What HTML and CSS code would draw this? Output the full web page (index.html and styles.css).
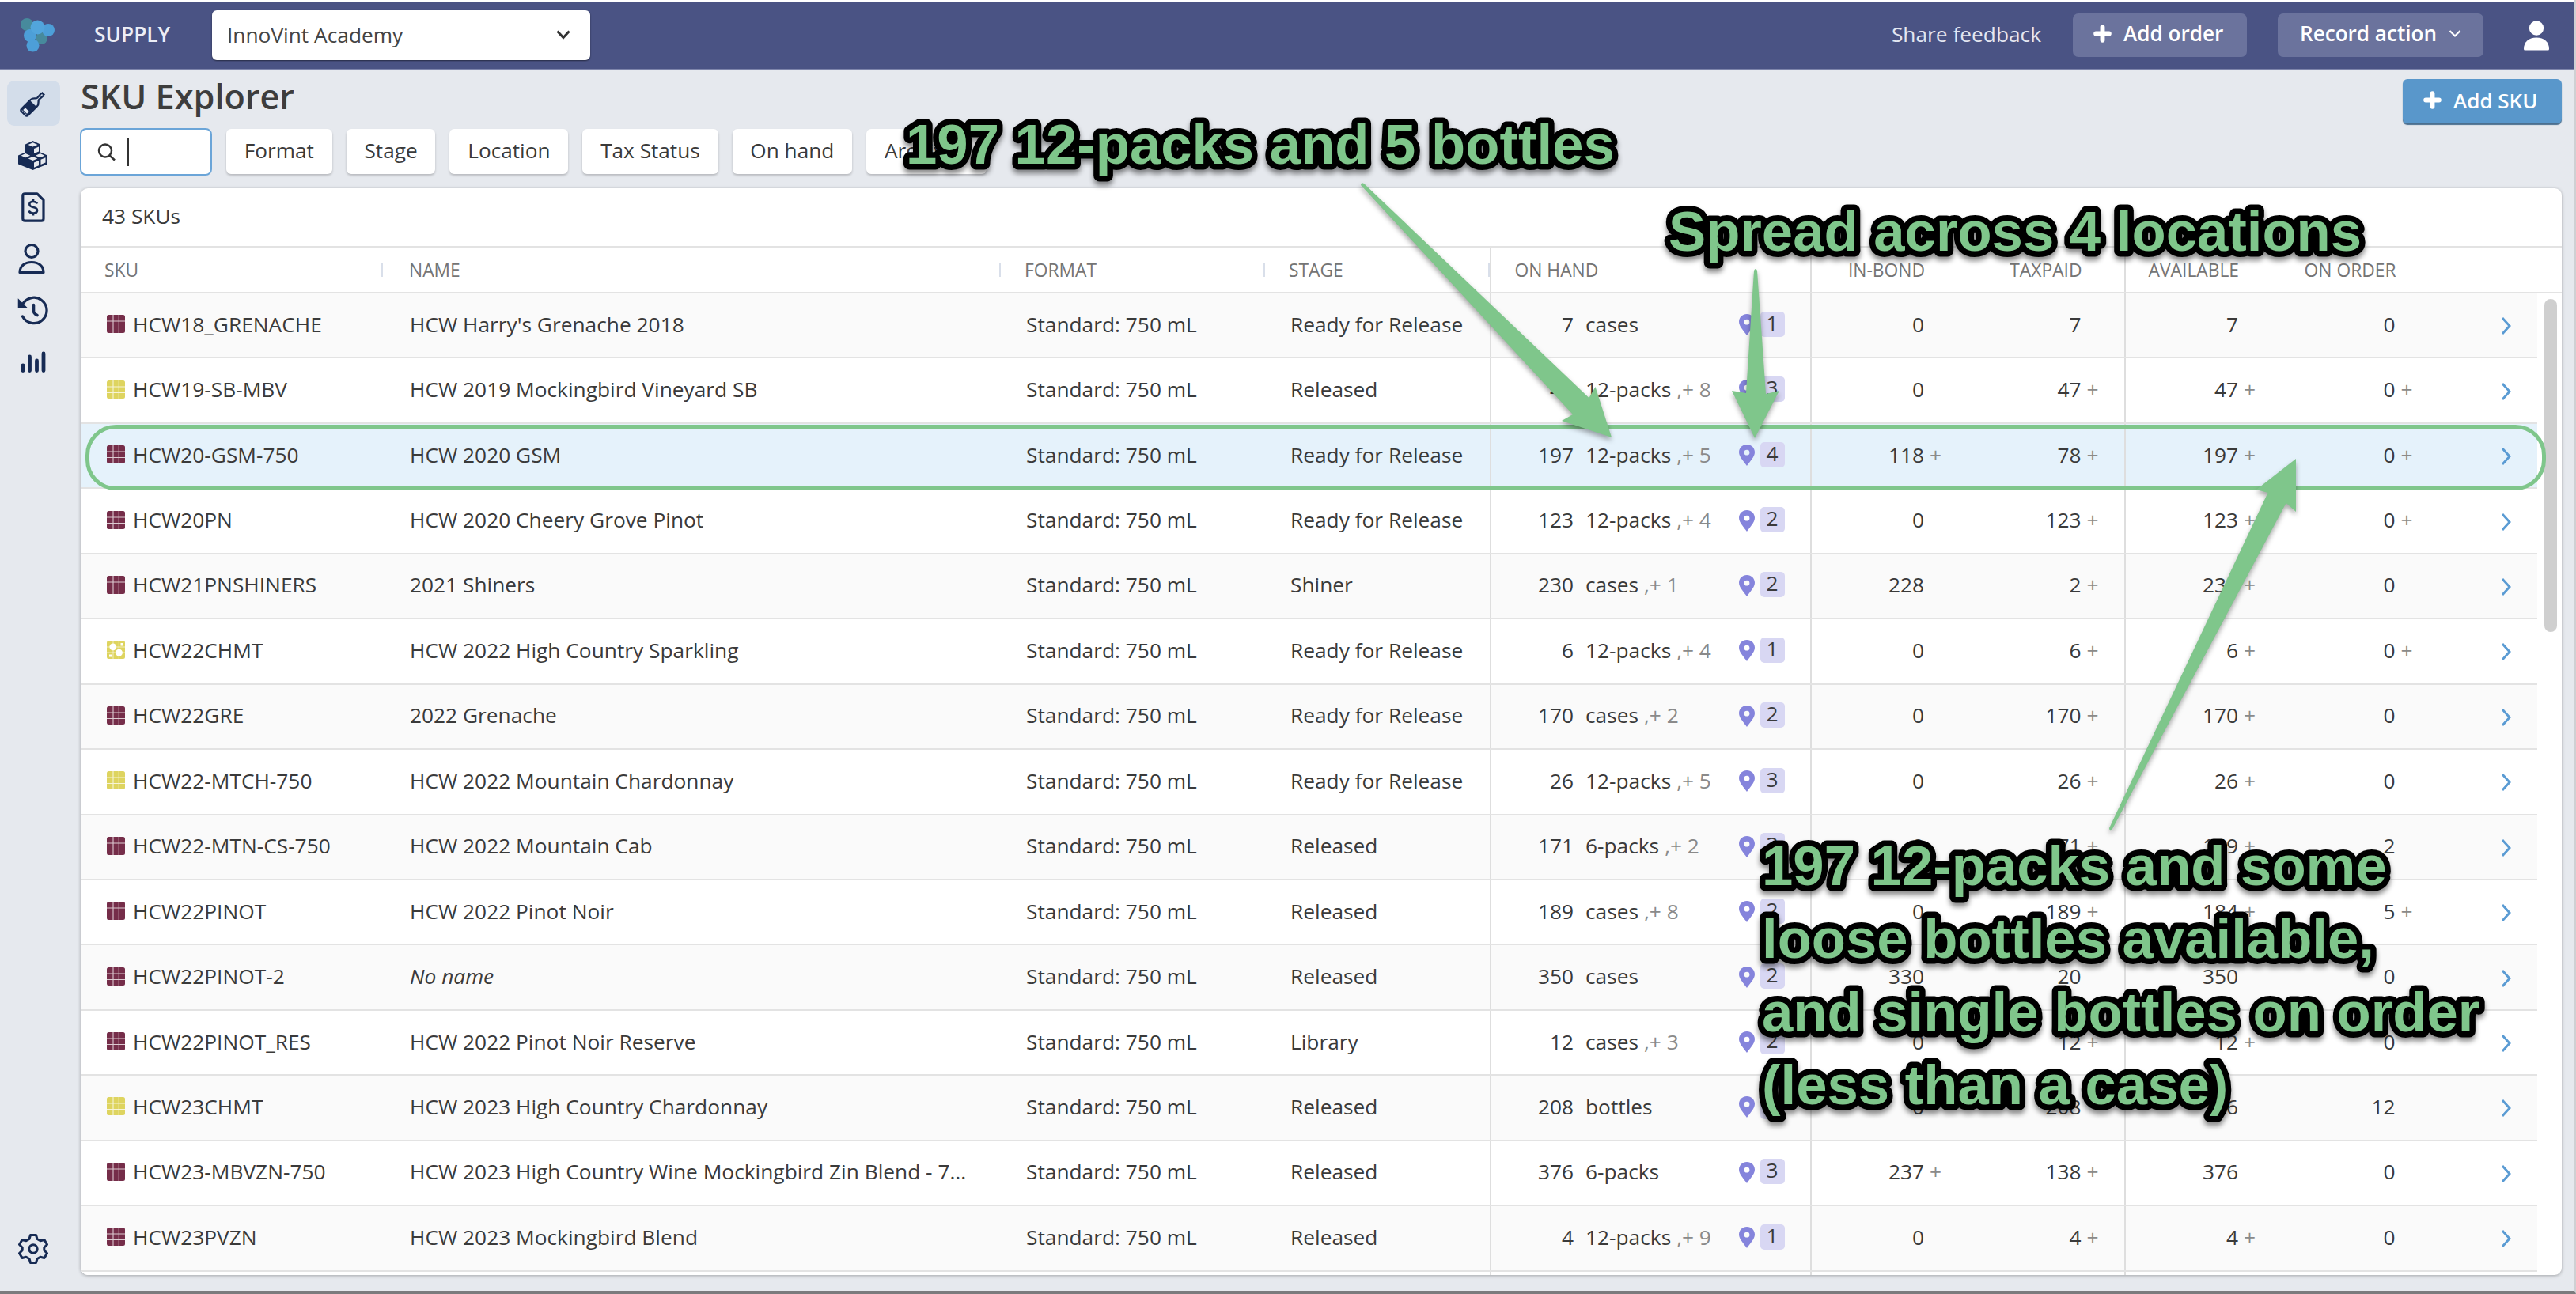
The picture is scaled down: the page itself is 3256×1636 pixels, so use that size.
FILE: index.html
```html
<!DOCTYPE html>
<html lang="en">
<head>
    <meta charset="UTF-8">
    <title>SKU Explorer</title>
    <link rel="stylesheet" href="styles.css">
</head>
<body>
    <svg class="sprite">
        <symbol id="plus" viewBox="0 0 22 22"><path d="M11 3v16M3 11h16" stroke="currentColor" stroke-width="5.600" stroke-linecap="round"/></symbol>
        <symbol id="pin" viewBox="0 0 20 27"><path fill-rule="evenodd" d="M10 0C4.300 0 0 4.400 0 9.800 0 15.500 6.500 22 10 27c3.500-5 10-11.500 10-17.200C20 4.400 15.700 0 10 0zm0 6.800a3.400 3.400 0 1 1 0 6.800 3.400 3.400 0 0 1 0-6.800z" fill="#8584dc"/></symbol>
        <symbol id="arrow" viewBox="0 0 14 24"><path d="M2 2l9 10-9 10" fill="none" stroke="#5a9bd3" stroke-width="2.900"/></symbol>
        <symbol id="grid" viewBox="0 0 23 23">
            <rect width="23" height="23" rx="2.500" fill="currentColor"/>
            <path d="M8 0v23M15.300 0v23M0 8h23M0 15.500h23" stroke="#fff" stroke-opacity=".75" stroke-width="1.100"/>
        </symbol>
        <symbol id="bubbles" viewBox="0 0 23 23">
            <rect width="23" height="23" rx="2.500" fill="currentColor"/>
            <path d="M8 0v23M15.300 0v23M0 8h23M0 15h23" stroke="#fff" stroke-opacity=".6" stroke-width="1"/>
            <circle cx="7.800" cy="7.800" r="4.400" fill="#fff"/>
            <circle cx="15.500" cy="15.200" r="4.400" fill="#fff"/>
            <path d="M17.500 3h3v3.500h-3zM3 17.500h3v3h-3z" fill="#fff"/>
        </symbol>
    </svg>

    <div class="topbar">
        <svg class="logo" viewBox="0 0 44 44">
            <circle cx="8" cy="8" r="8" fill="#478a9c"/>
            <circle cx="26.500" cy="25.500" r="7.500" fill="#478a9c"/>
            <circle cx="35" cy="15" r="8" fill="#4d9fd8"/>
            <circle cx="12" cy="22" r="8" fill="#4d9fd8"/>
            <circle cx="21.500" cy="11.500" r="9" fill="#52a5dc"/>
            <circle cx="15.500" cy="34.500" r="8" fill="#4d9fd8"/>
        </svg>
        <div class="app-name">SUPPLY</div>
        <div class="winery-select">
            <span>InnoVint Academy</span>
            <svg width="20" height="14" viewBox="0 0 20 14"><path d="M2.500 2.500l7.500 8 7.500-8" fill="none" stroke="#333" stroke-width="3"/></svg>
        </div>
        <div class="feedback">Share feedback</div>
        <div class="top-btn add-order"><svg class="plus-icon"><use href="#plus"/></svg>Add order</div>
        <div class="top-btn record">Record action<svg class="caret" viewBox="0 0 16 11"><path d="M1.500 2l6.500 6.500L14.500 2" fill="none" stroke="#fff" stroke-width="2.200"/></svg></div>
        <svg class="user" viewBox="0 0 32 38"><circle cx="16" cy="9.500" r="9.200" fill="#fff"/><path d="M0 36c0-9 6-14.500 16-14.500S32 27 32 36q0 1.500-1.500 1.500h-29Q0 37.500 0 36z" fill="#fff"/></svg>
    </div>

    <div class="layout">
        <div class="sidebar">
            <div class="nav-item active">
                <svg width="36" height="36" viewBox="0 0 36 36">
                    <g transform="rotate(45 18 18)">
                        <path d="M15 -3h6M15.500-2.500l.7 10c0 3-5.200 4-5.200 9V36q0 3 3 3h8q3 0 3-3V16.500c0-5-5.200-6-5.200-9l.7-10" fill="none" stroke="#172b54" stroke-width="2.800"/>
                        <path d="M11 18h14v19H11z" fill="#172b54"/>
                        <path d="M14 31h8v4.500h-8z" fill="#e3e9f2"/>
                    </g>
                </svg>
            </div>
            <div class="nav-item">
                <svg width="37" height="37" viewBox="0 0 37 37">
                    <path d="M18.500 0l9.500 4.500v10l9 4v11L18.500 37 0 29.500v-11l9-4v-10z" fill="#172b54"/>
                    <path d="M12.500 5l6-2.700 6 2.700-6 2.600zM20 10l6-2.600v6.200L20 16zM3.500 18.700l5.800-2.600 5.800 2.600-5.800 2.500zM12.700 22.500l5.800-2.500 5.800 2.500-5.800 2.600zM22 18.700l5.700-2.600 5.800 2.600-5.800 2.500zM20 27.500l6-2.600v6.300l-6 2.600zM28.500 23.800l6-2.600v6.200l-6 2.600z" fill="#e6e9ee"/>
                </svg>
            </div>
            <div class="nav-item">
                <svg width="30" height="38" viewBox="0 0 30 38" fill="none" stroke="#172b54" stroke-width="3.200" stroke-linejoin="round">
                    <path d="M4.500 1.800h15.500l8 8v23.700q0 2.700-2.700 2.700H4.500q-2.700 0-2.700-2.700V4.500q0-2.700 2.700-2.700z"/>
                    <path d="M20 14.500c-1-2-2.700-2.700-5-2.700-6.500 0-6 6.200 0 7.200 6.800 1 6.500 7.500 0 7.500-2.800 0-4.700-1-5.500-3M15 9v3M15 26v3.500" stroke-width="2.700"/>
                </svg>
            </div>
            <div class="nav-item">
                <svg class="person" width="34" height="40" viewBox="0 0 34 40" fill="none" stroke="#172b54" stroke-width="3.200" stroke-linejoin="round">
                    <circle cx="17" cy="10.500" r="8"/><path d="M2 37.500c0-8 6-13 15-13s15 5 15 13z"/>
                </svg>
            </div>
            <div class="nav-item">
                <svg width="40" height="38" viewBox="0 0 40 38" fill="none" stroke="#172b54" stroke-width="3.300" stroke-linecap="round">
                    <path d="M6 12A16.200 16.200 0 1 1 6.500 26"/><path d="M1.500 5v9.500H11L1.500 5z" fill="#172b54" stroke-width="1.500"/>
                    <path d="M20.500 11.500v8q0 2 2 3.500l2.500 1.500" stroke-width="3.600"/>
                </svg>
            </div>
            <div class="nav-item">
                <svg width="32" height="28" viewBox="0 0 32 28" stroke="#172b54" stroke-width="4.800" stroke-linecap="round">
                    <path d="M3 18v6.500M11.500 7v17.500M20.500 12v12.500M29 3v21.500"/>
                </svg>
            </div>
            <div class="nav-item settings">
                <svg width="38" height="40" viewBox="0 0 38 40" fill="none" stroke="#172b54" stroke-width="3" stroke-linejoin="round">
                    <path d="M15.500 2.500h7l1.500 5 4 2.300 5-1.300 3.500 6-3.700 3.700v3.600l3.700 3.700-3.500 6-5-1.300-4 2.300-1.500 5h-7l-1.500-5-4-2.300-5 1.300-3.500-6 3.700-3.700v-3.600L1.500 14.500l3.500-6 5 1.300 4-2.300z"/>
                    <circle cx="19" cy="20" r="5.200"/>
                </svg>
            </div>
        </div>

        <div class="main">
            <div class="title-row">
                <h1>SKU Explorer</h1>
                <div class="add-sku"><svg class="plus-icon"><use href="#plus"/></svg>Add SKU</div>
            </div>
            <div class="filters">
                <div class="search">
                    <svg width="24" height="23" viewBox="0 0 24 23" fill="none" stroke="#333" stroke-width="2.500"><circle cx="10" cy="9.500" r="8"/><path d="M15.500 15.500l6.500 6"/></svg>
                    <span class="cursor"></span>
                </div>
                <div class="filter">Format</div>
                <div class="filter">Stage</div>
                <div class="filter">Location</div>
                <div class="filter">Tax Status</div>
                <div class="filter">On hand</div>
                <div class="filter">Archived</div>
            </div>

            <div class="card">
                <div class="count">43 SKUs</div>
                <div class="row head">
                    <div class="sep">SKU</div>
                    <div class="sep">NAME</div>
                    <div class="sep">FORMAT</div>
                    <div class="sep line">STAGE</div>
                    <div class="line">ON HAND</div>
                    <div class="num">IN-BOND</div>
                    <div class="num line">TAXPAID</div>
                    <div class="num">AVAILABLE</div>
                    <div class="num">ON ORDER</div>
                    <div></div>
                </div>
                <div class="body">
                    <div class="rows" id="rows"></div>
                    <div class="scrollbar"><div class="thumb"></div></div>
                </div>
            </div>
        </div>
    </div>

    <svg class="notes" viewBox="0 0 3256 1636">
        <rect x="110.500" y="539.500" width="3105" height="78" rx="36" fill="none" stroke="#7fc68b" stroke-width="5"/>
        <g class="arrows">
            <path d="M1720 234q0-4 4-2L2008.500 503l8-14L2037 553l-63-21 14-8z"/>
            <path d="M2217 342q2-4 4 0L2232 498l17-4-31 60-29-60 18 3z"/>
            <path d="M2666 1047q0 4 4 1L2889.600 636l12.400 11v-67l-50 39 14.500 4z"/>
        </g>
        <g class="captions">
            <text x="1145" y="207">197 12-packs and 5 bottles</text>
            <text x="2109" y="317">Spread across 4 locations</text>
            <text x="2227" y="1119">197 12-packs and some</text>
            <text x="2227" y="1211">loose bottles available,</text>
            <text x="2227" y="1304">and single bottles on order</text>
            <text x="2227" y="1396">(less than a case)</text>
        </g>
    </svg>

    <script>
        // color, sku, name, stage, qty, unit, loose, locations, in-bond, taxpaid, available, on order
        const skus = [
            ['red', 'HCW18_GRENACHE', "HCW Harry's Grenache 2018", 'Ready for Release', '7', 'cases', '', 1, '0', '7', '7', '0'],
            ['white', 'HCW19-SB-MBV', 'HCW 2019 Mockingbird Vineyard SB', 'Released', '47', '12-packs', '8', 3, '0', '47+', '47+', '0+'],
            ['red', 'HCW20-GSM-750', 'HCW 2020 GSM', 'Ready for Release', '197', '12-packs', '5', 4, '118+', '78+', '197+', '0+'],
            ['red', 'HCW20PN', 'HCW 2020 Cheery Grove Pinot', 'Ready for Release', '123', '12-packs', '4', 2, '0', '123+', '123+', '0+'],
            ['red', 'HCW21PNSHINERS', '2021 Shiners', 'Shiner', '230', 'cases', '1', 2, '228', '2+', '230+', '0'],
            ['sparkling', 'HCW22CHMT', 'HCW 2022 High Country Sparkling', 'Ready for Release', '6', '12-packs', '4', 1, '0', '6+', '6+', '0+'],
            ['red', 'HCW22GRE', '2022 Grenache', 'Ready for Release', '170', 'cases', '2', 2, '0', '170+', '170+', '0'],
            ['white', 'HCW22-MTCH-750', 'HCW 2022 Mountain Chardonnay', 'Ready for Release', '26', '12-packs', '5', 3, '0', '26+', '26+', '0'],
            ['red', 'HCW22-MTN-CS-750', 'HCW 2022 Mountain Cab', 'Released', '171', '6-packs', '2', 3, '0', '171+', '169+', '2'],
            ['red', 'HCW22PINOT', 'HCW 2022 Pinot Noir', 'Released', '189', 'cases', '8', 2, '0', '189+', '184+', '5+'],
            ['red', 'HCW22PINOT-2', '', 'Released', '350', 'cases', '', 2, '330', '20', '350', '0'],
            ['red', 'HCW22PINOT_RES', 'HCW 2022 Pinot Noir Reserve', 'Library', '12', 'cases', '3', 2, '0', '12+', '12+', '0'],
            ['white', 'HCW23CHMT', 'HCW 2023 High Country Chardonnay', 'Released', '208', 'bottles', '', 1, '0', '208', '196', '12'],
            ['red', 'HCW23-MBVZN-750', 'HCW 2023 High Country Wine Mockingbird Zin Blend - 7...', 'Released', '376', '6-packs', '', 3, '237+', '138+', '376', '0'],
            ['red', 'HCW23PVZN', 'HCW 2023 Mockingbird Blend', 'Released', '4', '12-packs', '9', 1, '0', '4+', '4+', '0']
        ];

        function num(value, cls) {
            return `<div class="num ${cls}">${value.replace('+', '')}<span class="more">${value.endsWith('+') ? '+' : ''}</span></div>`;
        }

        const html = skus.map(([color, sku, name, stage, qty, unit, loose, locs, bond, tax, avail, order]) => `
            <div class="row ${sku === 'HCW20-GSM-750' ? 'selected' : ''}">
                <div><svg class="swatch ${color}"><use href="#${color === 'sparkling' ? 'bubbles' : 'grid'}"/></svg>${sku}</div>
                <div class="name">${name || '<i>No name</i>'}</div>
                <div class="format">Standard: 750 mL</div>
                <div class="format line">${stage}</div>
                <div class="onhand line">
                    <span class="qty">${qty}</span><span>${unit}</span>
                    <span class="loose">${loose ? ',+ ' + loose : ''}</span>
                    <svg class="pin"><use href="#pin"/></svg><span class="badge">${locs}</span>
                </div>
                ${num(bond, '')}${num(tax, 'line')}${num(avail, '')}${num(order, '')}
                <div class="go"><svg width="14" height="24"><use href="#arrow"/></svg></div>
            </div>`).join('');

        // the next row is only just in view
        const empty = '<div class="row"><div></div><div></div><div></div><div class="line"></div><div class="line"></div><div></div><div class="line"></div><div></div><div></div><div></div></div>';
        document.getElementById('rows').innerHTML = html + empty;
    </script>
</body>
</html>
```
FILE: styles.css
```css
* {
    box-sizing: border-box;
}
body {
    margin: 0;
    height: 1636px;
    padding-top: 2px;
    background-color: #e6e9ee;
    border-right: 2px solid #cfd0d3;
    border-bottom: 4px solid #7b7b7d;
    font-family: "Open Sans", sans-serif;
    font-size: 26.3px;
    color: #3a3a3a;
    overflow: hidden;
    display: flex;
    flex-direction: column;
    box-shadow: inset 0 2px #fff;
}
svg {
    display: block;
    flex: none;
}
.sprite {
    position: absolute;
    width: 0;
    height: 0;
}

/* top bar */
.topbar {
    height: 86px;
    flex: none;
    background-color: #4a5384;
    border-bottom: 1px solid #7e85ab;
    display: flex;
    align-items: center;
    padding: 0 32px 0 26px;
    color: #fff;
}
.logo {
    width: 44px;
    height: 44px;
}
.app-name {
    width: 149px;
    margin-left: 49px;
    font-weight: 600;
    color: #eceef6;
    padding-bottom: 3px;
}
.winery-select {
    width: 478px;
    height: 63px;
    background-color: #fff;
    border-radius: 6px;
    box-shadow: 0 1px 2px rgba(0,0,0,0.5);
    color: #444;
    display: flex;
    align-items: center;
    justify-content: space-between;
    padding: 0 24px 2px 19px;
}
.feedback {
    margin-left: auto;
    margin-right: 40px;
    color: #e4e6f0;
    padding-bottom: 3px;
}
.top-btn {
    height: 55px;
    border-radius: 7px;
    background-color: #6b739d;
    font-weight: 600;
    font-size: 26.1px;
    display: flex;
    align-items: center;
    padding-bottom: 5px;
}
.add-order {
    width: 220px;
    padding-left: 26px;
    margin-right: 39px;
}
.record {
    width: 260px;
    padding-left: 28px;
    margin-right: 51px;
}
.plus-icon {
    width: 23px;
    height: 23px;
    margin-right: 15px;
    color: #fff;
}
.caret {
    width: 16px;
    height: 11px;
    margin-left: 15px;
}
.user {
    width: 32px;
    height: 38px;
}

/* page */
.layout {
    flex: 1;
    min-height: 0;
    display: flex;
}
.sidebar {
    width: 102px;
    padding: 14px 0 25px 9px;
    display: flex;
    flex-direction: column;
    gap: 8.6px;
}
.nav-item {
    width: 67px;
    height: 57px;
    padding-right: 2px;
    border-radius: 9px;
    display: flex;
    align-items: center;
    justify-content: center;
}
.nav-item.active {
    background-color: #d3ddea;
}
.nav-item.active svg {
    overflow: visible;
    width: 30px;
    height: 30px;
}
.person {
    margin-right: 3px;
}
.settings {
    margin-top: auto;
}
.main {
    width: 3136px;
    padding-bottom: 20px;
    display: flex;
    flex-direction: column;
}
.title-row {
    height: 74px;
    display: flex;
    justify-content: space-between;
    align-items: flex-start;
    padding-top: 12px;
}
h1 {
    margin: -8px 0 0;
    font-size: 43.2px;
    line-height: 60px;
    font-weight: 600;
    color: #3d3d3d;
}
.add-sku {
    width: 201px;
    height: 56px;
    padding: 0 0 3px 26px;
    border-radius: 6px;
    background-color: #5997cb;
    box-shadow: 0 2px 1px #4b6f8f;
    color: #fff;
    font-weight: 600;
    font-size: 26px;
    display: flex;
    align-items: center;
}
.filters {
    display: flex;
    gap: 18px;
    margin-left: -1px;
}
.search {
    width: 167px;
    height: 60px;
    border: 2.5px solid #6ba5d8;
    border-radius: 8px;
    background-color: #fff;
    display: flex;
    align-items: center;
    padding-left: 20px;
}
.cursor {
    width: 2px;
    height: 36px;
    margin-left: 14px;
    background-color: #333;
}
.filter {
    height: 57px;
    margin-top: 1px;
    padding: 8px 22.8px 0;
    line-height: 39px;
    font-size: 26.2px;
    background-color: #fff;
    border-radius: 6px;
    box-shadow: 0 2px 3px rgba(0,0,0,0.2);
}

/* table */
.card {
    flex: 1;
    min-height: 0;
    margin-top: 16px;
    background-color: #fff;
    border-radius: 9px;
    box-shadow: 0 1px 4px rgba(0,0,0,0.3);
    overflow: hidden;
    display: flex;
    flex-direction: column;
}
.count {
    height: 75px;
    flex: none;
    padding-left: 27px;
    line-height: 71px;
    border-bottom: 2px solid #e3e3e3;
}
.row {
    height: 82.45px;
    border-bottom: 2px solid #e3e3e3;
    display: grid;
    grid-template-columns: 382px 781px 334px 285.5px 405px 198.5px 198.5px 198.5px 198.5px 1fr;
}
.row > div {
    display: flex;
    align-items: center;
    padding: 0 0 3px 33px;
    white-space: nowrap;
}
.row:nth-child(odd) {
    background-color: #fafafa;
}
.row.selected {
    background-color: #e5f2fb;
}
.row:last-child {
    background-color: #fff;
}
.row > .line {
    border-right: 2px solid #dedede;
}
.row > .name {
    padding-left: 34px;
}
.row > .format {
    padding-left: 32px;
}
.row.head {
    height: 58px;
    flex: none;
    background-color: #fff;
    font-size: 22.8px;
    color: #757575;
}
.row.head > div {
    padding: 1px 0 0 30px;
}
.head > .sep {
    background: linear-gradient(#d9dfea, #d9dfea) no-repeat right 0 top 19px / 2px 18px;
}
.row.head > .sep:nth-child(2) {
    padding-left: 33px;
}
.row > .num {
    justify-content: flex-end;
    padding-left: 0;
    padding-right: 27px;
}
.row > .num.line {
    padding-right: 25px;
}
.row.head > .num {
    padding-right: 55px;
}
.row.head > .num.line {
    padding-right: 53px;
}
.body {
    flex: 1;
    min-height: 0;
    display: flex;
}
.rows {
    width: 3105px;
}
.swatch {
    width: 23px;
    height: 23px;
    margin-right: 10px;
}
.red {
    color: #752d49;
}
.white, .sparkling {
    color: #ded45f;
}
.row > .onhand {
    padding-left: 0;
}
.qty {
    width: 104.5px;
    text-align: right;
    margin-right: 15px;
}
.loose {
    color: #8a8a8a;
    margin-left: 7px;
}
.pin {
    width: 20px;
    height: 27px;
    margin-left: auto;
    margin-top: 2px;
}
.badge {
    width: 31px;
    height: 32px;
    margin-left: 7px;
    margin-right: 32px;
    border-radius: 5px;
    background-color: #d8d7f3;
    line-height: 28px;
    text-align: center;
}
.more {
    width: 29px;
    padding-left: 7px;
    color: #8a8a8a;
}
.row > .go {
    padding: 2px 0 0 77px;
}
.scrollbar {
    flex: 1;
    padding: 7px 0 0 9px;
}
.thumb {
    width: 16px;
    height: 421px;
    border-radius: 8px;
    background-color: #cfcfcf;
}

/* callouts lie over the page */
.notes {
    position: absolute;
    left: 0;
    top: 0;
    width: 3256px;
    height: 1636px;
}
.arrows {
    fill: #7fc68b;
    filter: drop-shadow(0 4px 3px rgba(0,0,0,0.35));
}
.captions {
    font-family: "Liberation Sans", Arial, sans-serif;
    font-weight: bold;
    font-size: 70.7px;
    fill: #7fc68b;
    stroke: #000;
    stroke-width: 15px;
    stroke-linejoin: round;
    paint-order: stroke fill;
    filter: drop-shadow(0 5px 3px rgba(0,0,0,0.45));
}
```
